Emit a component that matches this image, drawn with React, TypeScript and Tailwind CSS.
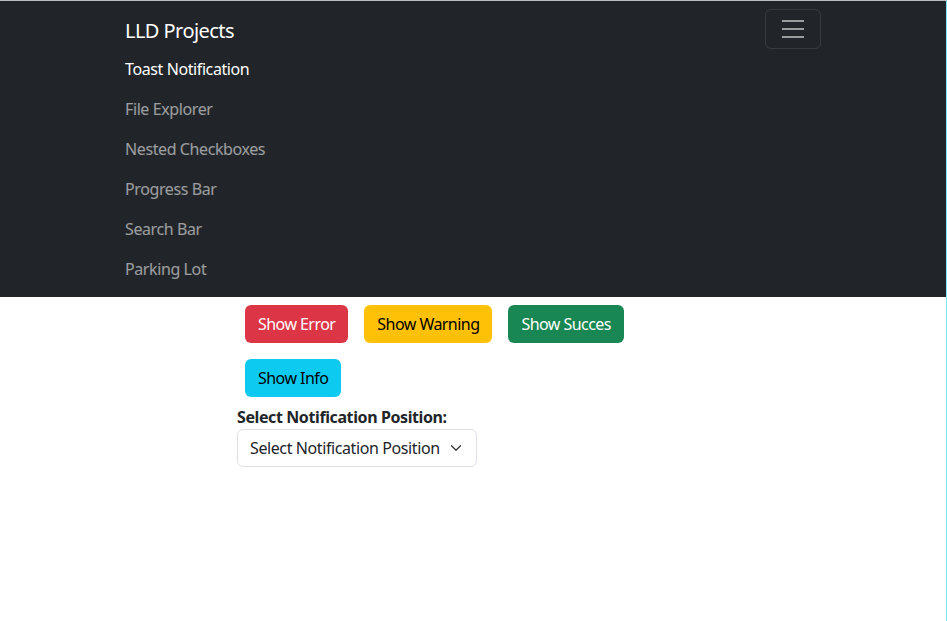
import React from 'react';

const links = ['Toast Notification', 'File Explorer', 'Nested Checkboxes', 'Progress Bar', 'Search Bar', 'Parking Lot'];

const btn = 'm-2 px-3 py-1.5 rounded-md border border-transparent text-[16px] leading-6 tracking-[-0.55px]';

const App: React.FC = () => {
  return (
    <div
      className="min-h-[621px] bg-white border-t border-t-[#b9bcc0] border-r border-r-[#7fe6fb] tracking-[-0.4px]"
      style={{ fontFamily: '"Noto Sans", "Segoe UI", sans-serif' }}
    >
      <nav className="bg-[#212529] py-2">
        <div className="w-[720px] mx-auto px-3">
          <div className="flex items-center justify-between">
            <span className="text-white text-[20px] leading-[30px] pt-[7px] pb-[3px] tracking-[-0.55px]">LLD Projects</span>
            <button className="h-10 w-14 border border-white/10 rounded-md flex items-center justify-center">
              <svg width="30" height="30" viewBox="0 0 30 30">
                <path d="M4 7h22M4 15h22M4 23h22" stroke="rgba(255,255,255,0.55)" strokeWidth="2" />
              </svg>
            </button>
          </div>
          <ul className="flex flex-col">
            {links.map((l, i) => (
              <li key={l} className={`py-2 text-[16px] leading-6 ${i === 0 ? 'text-white' : 'text-white/55'}`}>
                {l}
              </li>
            ))}
          </ul>
        </div>
      </nav>
      <div className="pl-[237px]">
        <div className="flex flex-wrap w-[420px]">
          <button className={`${btn} bg-[#dc3545] text-white`}>Show Error</button>
          <button className={`${btn} bg-[#ffc107] text-black`}>Show Warning</button>
          <button className={`${btn} bg-[#198754] text-white`}>Show Succes</button>
          <button className={`${btn} bg-[#0dcaf0] text-black`}>Show Info</button>
        </div>
        <div className="font-bold text-[#212529] text-[16px] leading-6">Select Notification Position:</div>
        <div className="w-[240px] h-[38px] border border-[#dee2e6] rounded-md flex items-center justify-between pl-3 pr-3 text-[#212529] text-[16px] whitespace-nowrap">
          <span>Select Notification Position</span>
          <svg width="16" height="12" viewBox="0 0 16 16" fill="none">
            <path d="M2 5l6 6 6-6" stroke="#343a40" strokeWidth="1.75" strokeLinecap="round" strokeLinejoin="round" />
          </svg>
        </div>
      </div>
    </div>
  );
};

export default App;
